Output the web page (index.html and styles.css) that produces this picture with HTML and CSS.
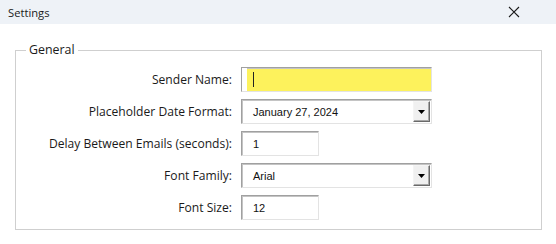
FILE: index.html
```html
<!DOCTYPE html>
<html lang="en">
<head>
    <meta charset="UTF-8">
    <title>Settings</title>
    <link rel="stylesheet" href="styles.css">
</head>
<body>
    <div class="titlebar">
        <span class="title">Settings</span>
        <svg class="close" width="12" height="12" viewBox="0 0 12 12">
            <path d="M1 1 L11 11 M11 1 L1 11" stroke="#1a1a1a" stroke-width="1.1" fill="none"/>
        </svg>
    </div>

    <fieldset class="group">
        <legend>General</legend>
        <div class="form">
            <label>Sender Name:</label>
            <div class="field wide highlight"><span class="caret"></span></div>

            <label>Placeholder Date Format:</label>
            <div class="field wide combo">
                <span class="value">January 27, 2024</span>
                <span class="drop"><svg width="7" height="4" viewBox="0 0 7 4"><path d="M0 0 H7 L3.5 4 Z" fill="#000"/></svg></span>
            </div>

            <label>Delay Between Emails (seconds):</label>
            <div class="field short"><span class="value">1</span></div>

            <label>Font Family:</label>
            <div class="field wide combo">
                <span class="value">Arial</span>
                <span class="drop"><svg width="7" height="4" viewBox="0 0 7 4"><path d="M0 0 H7 L3.5 4 Z" fill="#000"/></svg></span>
            </div>

            <label>Font Size:</label>
            <div class="field short"><span class="value">12</span></div>
        </div>
    </fieldset>
</body>
</html>
```

FILE: styles.css
```css
body {
    margin: 0;
    background: #ffffff;
    font-family: "Open Sans", "Noto Sans", sans-serif;
    color: #1a1a1a;
}
.titlebar {
    height: 24px;
    background: #eef2f7;
    display: flex;
    align-items: center;
    justify-content: space-between;
    padding: 0 36px 0 8px;
}
.title {
    font-size: 11.2px;
}
.close {
    display: block;
}
.group {
    margin: 18px 14px 0 15px;
    padding: 0 0 9px 0;
    border: 1px solid #cfcfcf;
}
.group legend {
    margin-left: 10px;
    padding: 0 3px;
    font-size: 12.4px;
    line-height: 16px;
    color: #1a1a1a;
}
.form {
    display: grid;
    grid-template-columns: 216px auto;
    column-gap: 9px;
    row-gap: 7px;
    padding-top: 9px;
    align-items: center;
}
.form label {
    text-align: right;
    font-size: 12.1px;
    color: #1a1a1a;
}
.field {
    box-sizing: border-box;
    height: 25px;
    border: 1px solid;
    border-color: #a0a0a0 #e3e3e3 #e3e3e3 #a0a0a0;
    box-shadow: inset 1px 1px 0 #c4c4c4;
    background: #ffffff;
    display: flex;
    align-items: center;
    font-family: "Liberation Sans", Arial, sans-serif;
    font-size: 11px;
    color: #111;
}
.wide {
    width: 191px;
}
.short {
    width: 78px;
}
.value {
    padding-left: 11px;
    flex: 1;
}
.highlight {
    background: #fdf25c;
    box-shadow: inset 5px 0 0 #ffffff, inset 1px 1px 0 #c4c4c4;
}
.caret {
    width: 1px;
    height: 15px;
    margin-left: 11px;
    background: #222;
}
.combo .drop {
    box-sizing: border-box;
    width: 17px;
    height: 21px;
    margin-right: 1px;
    border: 1px solid;
    border-color: #f4f4f4 #6a6a6a #6a6a6a #f4f4f4;
    box-shadow: inset -1px -1px 0 #a8a8a8;
    background: #f0f0f0;
    display: flex;
    align-items: center;
    justify-content: center;
}
.combo .drop svg {
    display: block;
}
```
